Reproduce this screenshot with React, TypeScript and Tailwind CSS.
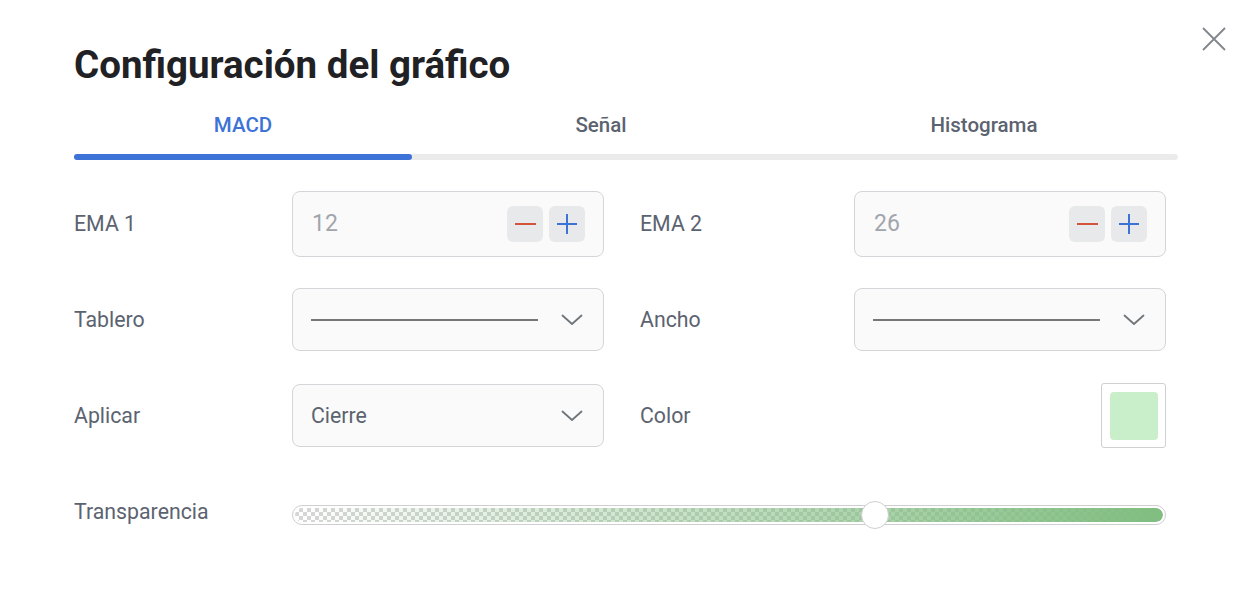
import { useState } from "react";

const font = { fontFamily: "Roboto, 'Noto Sans', sans-serif" };

function Chevron() {
  return (
    <svg width="22" height="12" viewBox="0 0 22 12" fill="none" className="shrink-0">
      <path d="M1.5 1.5 L11 10 L20.5 1.5" stroke="#70757a" strokeWidth="1.8" strokeLinecap="round" strokeLinejoin="round" />
    </svg>
  );
}

function Stepper({ value }: { value: number }) {
  const [v, setV] = useState(value);
  return (
    <div className="w-[312px] h-[66px] rounded-[8px] border border-[#d3d5d8] bg-[#fafafa] flex items-center pl-[19px] pr-[18px]">
      <span className="flex-1 text-[23px] text-[#a1a5ac]">{v}</span>
      <div className="flex gap-[6px]">
        <button
          onClick={() => setV(v - 1)}
          className="w-[36px] h-[36px] rounded-[6px] bg-[#e8e9eb] flex items-center justify-center"
        >
          <span className="block w-[21px] h-[2px] bg-[#d2553a]" />
        </button>
        <button
          onClick={() => setV(v + 1)}
          className="w-[36px] h-[36px] rounded-[6px] bg-[#e8e9eb] flex items-center justify-center"
        >
          <svg width="22" height="22" viewBox="0 0 22 22">
            <path d="M11 1 V21 M1 11 H21" stroke="#3d73d6" strokeWidth="2" />
          </svg>
        </button>
      </div>
    </div>
  );
}

function LineSelect() {
  return (
    <div className="w-[312px] h-[63px] rounded-[8px] border border-[#d3d5d8] bg-[#fafafa] flex items-center pl-[18px] pr-[20px]">
      <span className="block w-[227px] h-[2px] bg-[#777777]" />
      <span className="flex-1" />
      <Chevron />
    </div>
  );
}

export default function App() {
  const [tab, setTab] = useState(0);
  const tabs = [
    { label: "MACD", w: "w-[338px]" },
    { label: "Señal", w: "w-[378px]" },
    { label: "Histograma", w: "flex-1" },
  ];

  return (
    <div style={font} className="relative w-[1248px] h-[596px] bg-white pl-[74px] pr-[70px] pt-[40px]">
      <button className="absolute top-[26px] right-[21px] w-[26px] h-[26px]" title="Cerrar">
        <svg width="26" height="26" viewBox="0 0 26 26">
          <path d="M2 2 L24 24 M24 2 L2 24" stroke="#80868b" strokeWidth="1.8" />
        </svg>
      </button>

      <h1 className="text-[38.5px] font-bold leading-[50px] text-[#1f2124]">
        Configuración del gráfico
      </h1>

      <div className="mt-[15px]">
        <div className="flex">
          {tabs.map((t, i) => (
            <button
              key={t.label}
              onClick={() => setTab(i)}
              className={`${t.w} h-[40px] text-[20.5px] font-medium ${i === tab ? "text-[#3d73d6]" : "text-[#5c6370]"}`}
            >
              {t.label}
            </button>
          ))}
        </div>
        <div className="mt-[9px] h-[6px] rounded-full bg-[#ebebeb]">
          <div className="w-[338px] h-full rounded-full bg-[#3d73d6]" />
        </div>
      </div>

      <div className="mt-[31px] flex flex-col gap-[31px] text-[21.3px] text-[#5c6370]">
        <div className="flex items-center">
          <span className="w-[218px]">EMA 1</span>
          <Stepper value={12} />
          <span className="w-[214px] ml-[36px]">EMA 2</span>
          <Stepper value={26} />
        </div>

        <div className="flex items-center">
          <span className="w-[218px]">Tablero</span>
          <LineSelect />
          <span className="w-[214px] ml-[36px]">Ancho</span>
          <LineSelect />
        </div>

        <div className="flex items-center mt-[1px]">
          <span className="w-[218px]">Aplicar</span>
          <div className="w-[312px] h-[63px] rounded-[8px] border border-[#d3d5d8] bg-[#fafafa] flex items-center pl-[18px] pr-[20px]">
            <span className="flex-1 text-[21.3px] text-[#5c6370]">Cierre</span>
            <Chevron />
          </div>
          <span className="w-[214px] ml-[36px]">Color</span>
          <div className="ml-auto w-[65px] h-[65px] rounded-[3px] border border-[#d0d0d0] bg-white flex items-center justify-center mr-[12px]">
            <div className="w-[48px] h-[48px] rounded-[4px] bg-[#c8efca]" />
          </div>
        </div>

        <div className="flex items-center h-[64px] mr-[12px] mt-[4px]">
          <span className="w-[218px] mb-[6px]">Transparencia</span>
          <div className="relative flex-1 h-[20px] rounded-full border border-[#cfcfcf] bg-white p-[2px]">
            <div className="h-full rounded-full bg-[repeating-conic-gradient(#d6d6d6_0%_25%,#ffffff_0%_50%)] bg-[length:8px_8px] overflow-hidden">
              <div className="h-full w-full rounded-full bg-gradient-to-r from-[#80bd8000] to-[#80bd80]" />
            </div>
            <div className="absolute top-1/2 left-[66.7%] -translate-x-1/2 -translate-y-1/2 w-[28px] h-[28px] rounded-full bg-white border border-[#cfcfcf]" />
          </div>
        </div>
      </div>
    </div>
  );
}
